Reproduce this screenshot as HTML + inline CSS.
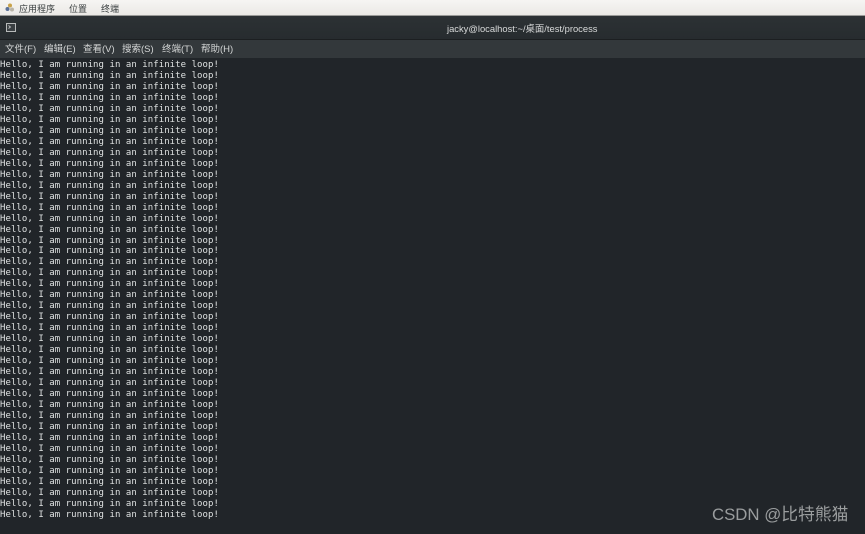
<!DOCTYPE html>
<html><head><meta charset="utf-8"><style>
html,body{margin:0;padding:0;width:865px;height:534px;overflow:hidden;background:#212529}
body{position:relative;font-family:"Liberation Sans","Noto Sans CJK SC",sans-serif}
div{position:absolute;white-space:nowrap}
#top{left:0;top:0;width:865px;height:16px;background:linear-gradient(#f6f5f3,#ebe9e6);border-bottom:1px solid #9a9a98;box-sizing:border-box;font-size:9px;color:#3a3f40;line-height:18px;font-family:"Noto Sans CJK SC",sans-serif}
#title{left:0;top:16px;width:865px;height:24px;background:linear-gradient(#2c3134,#272c2f);border-bottom:1px solid #1c1f21;box-sizing:border-box}
#menu{left:0;top:40px;width:865px;height:18px;background:#33383b;font-size:9.5px;color:#d4d6d6;line-height:20px;font-family:"Liberation Sans","Noto Sans CJK SC",sans-serif}
#term{left:0;top:60px;font:9px/10.975px "DejaVu Sans Mono",monospace;letter-spacing:.055px;color:#dfe2e2;white-space:pre;filter:blur(.25px)}
</style></head><body>
<div id="top">
<svg style="position:absolute;left:5px;top:3px" width="10" height="10" viewBox="0 0 10 10"><circle cx="5" cy="2.5" r="2" fill="#c8a24a"/><circle cx="2.5" cy="6" r="2" fill="#5a6f96"/><circle cx="7" cy="6.5" r="2" fill="#b9b4a8"/></svg>
<div style="left:19px;top:0">应用程序</div><div style="left:69px;top:0">位置</div><div style="left:101px;top:0">终端</div>
</div>
<div id="title">
<svg style="position:absolute;left:6px;top:7px" width="10" height="9" viewBox="0 0 10 9"><rect x=".5" y=".5" width="9" height="8" fill="#3a3f42" stroke="#b8baba"/><path d="M2.5 2.5l2 1.5-2 1.5" fill="none" stroke="#c8caca" stroke-width=".8"/></svg>
<div style="left:447px;top:0;font:9.4px/26px 'Liberation Sans','Noto Sans CJK SC',sans-serif;color:#d8dada">jacky@localhost:~/桌面/test/process</div>
</div>
<div id="menu">
<div style="left:5px;top:0">文件(F)</div><div style="left:44px;top:0">编辑(E)</div><div style="left:83px;top:0">查看(V)</div><div style="left:122px;top:0">搜索(S)</div><div style="left:162px;top:0">终端(T)</div><div style="left:201px;top:0">帮助(H)</div>
</div>
<div id="term">Hello, I am running in an infinite loop!
Hello, I am running in an infinite loop!
Hello, I am running in an infinite loop!
Hello, I am running in an infinite loop!
Hello, I am running in an infinite loop!
Hello, I am running in an infinite loop!
Hello, I am running in an infinite loop!
Hello, I am running in an infinite loop!
Hello, I am running in an infinite loop!
Hello, I am running in an infinite loop!
Hello, I am running in an infinite loop!
Hello, I am running in an infinite loop!
Hello, I am running in an infinite loop!
Hello, I am running in an infinite loop!
Hello, I am running in an infinite loop!
Hello, I am running in an infinite loop!
Hello, I am running in an infinite loop!
Hello, I am running in an infinite loop!
Hello, I am running in an infinite loop!
Hello, I am running in an infinite loop!
Hello, I am running in an infinite loop!
Hello, I am running in an infinite loop!
Hello, I am running in an infinite loop!
Hello, I am running in an infinite loop!
Hello, I am running in an infinite loop!
Hello, I am running in an infinite loop!
Hello, I am running in an infinite loop!
Hello, I am running in an infinite loop!
Hello, I am running in an infinite loop!
Hello, I am running in an infinite loop!
Hello, I am running in an infinite loop!
Hello, I am running in an infinite loop!
Hello, I am running in an infinite loop!
Hello, I am running in an infinite loop!
Hello, I am running in an infinite loop!
Hello, I am running in an infinite loop!
Hello, I am running in an infinite loop!
Hello, I am running in an infinite loop!
Hello, I am running in an infinite loop!
Hello, I am running in an infinite loop!
Hello, I am running in an infinite loop!
Hello, I am running in an infinite loop!</div>
<div style="left:712px;top:503px;font:16.8px/24px 'Liberation Sans','Noto Sans CJK SC',sans-serif;color:#9a9d9e">CSDN @比特熊猫</div>
</body></html>
